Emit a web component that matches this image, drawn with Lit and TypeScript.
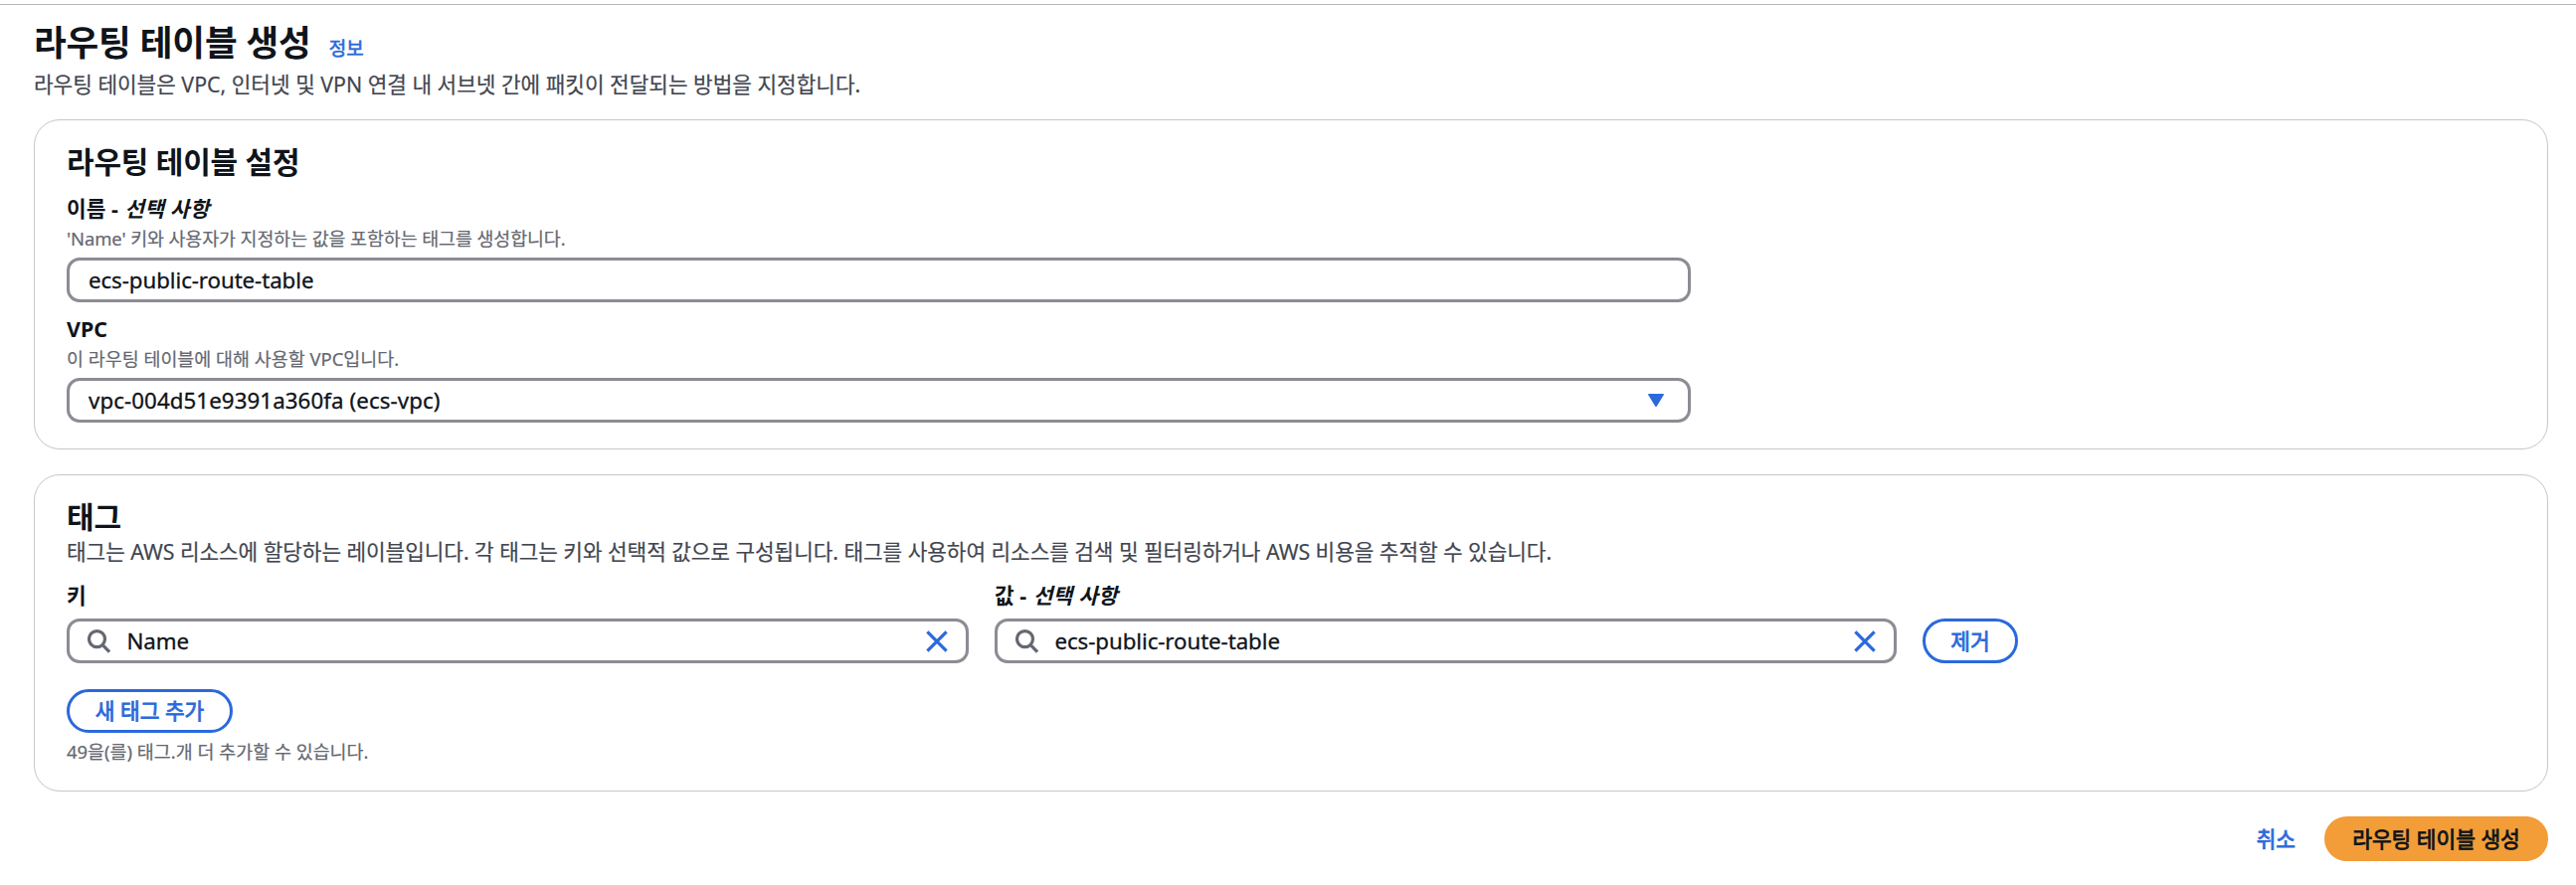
import { LitElement, html, css } from "lit";
import { customElement, property } from "lit/decorators.js";

const controls = css`
  * { box-sizing: border-box; margin: 0; }
  .control {
    display: flex;
    align-items: center;
    height: 45px;
    border: 3px solid #8c8c94;
    border-radius: 13px;
    padding: 0 19px;
    font-size: 22.3px;
    line-height: 32px;
    letter-spacing: -0.08px;
    color: #0f141a;
    white-space: nowrap;
  }
  .control .value { flex: 1; -webkit-text-stroke: 0.3px currentColor; }
  .select { letter-spacing: 0.08px; }
  svg { display: block; flex: none; }
`;

@customElement("form-field")
class FormField extends LitElement {
  @property() label = "";
  @property() hint = "";
  @property({ type: Boolean }) optional = false;

  static styles = css`
    * { box-sizing: border-box; }
    :host { display: flex; flex-direction: column; }
    .label { font-size: 21.4px; line-height: 28px; font-weight: 700; color: #0f141a; white-space: pre; }
    .label i { letter-spacing: 0.2px; margin-left: 1px; }
    .hint { font-size: 18.45px; line-height: 24px; margin-top: 4px; color: #656871; letter-spacing: var(--hint-spacing, 0); -webkit-text-stroke: 0.2px currentColor; }
    .body { margin-top: 7px; }
    .body.bare { margin-top: 9px; }
  `;

  render() {
    return html`
      <div class="label">${this.label}${this.optional ? html` - <i>선택 사항</i>` : ""}</div>
      ${this.hint ? html`<div class="hint">${this.hint}</div>` : ""}
      <div class="body ${this.hint ? "" : "bare"}"><slot></slot></div>
    `;
  }
}

@customElement("search-input")
class SearchInput extends LitElement {
  @property() value = "";

  static styles = [
    controls,
    css`
      :host { display: block; }
      .control { padding: 0 18px; }
      .value { margin-left: 16.5px; }
    `,
  ];

  render() {
    return html`
      <div class="control">
        <svg width="23" height="24" viewBox="0 0 23 24" fill="none" stroke="#656871" stroke-width="3.2">
          <circle cx="9.5" cy="9.6" r="8" />
          <path d="M15.2 15.6 L22 22.6" />
        </svg>
        <span class="value">${this.value}</span>
        <svg width="22" height="22" viewBox="0 0 22 22" fill="none" stroke="#2b69db" stroke-width="3.2">
          <path d="M1.4 1.4 L20.6 20.6 M20.6 1.4 L1.4 20.6" />
        </svg>
      </div>
    `;
  }
}

@customElement("app-root")
class AppRoot extends LitElement {
  static styles = [
    controls,
    css`
      :host {
        display: block;
        min-height: 890px;
        box-sizing: border-box;
        padding-top: 4px;
        background: #fff;
        color: #0f141a;
        font-family: "Noto Sans", "Noto Sans CJK KR", sans-serif;
      }
      .page { border-top: 1px solid #b4b4bb; padding: 15px 28px 0 34px; }
      .heading { display: flex; align-items: baseline; gap: 18px; }
      h1 { font-size: 35.6px; line-height: 44px; font-weight: 700; letter-spacing: -0.17px; }
      .info { font-size: 19px; line-height: 24px; color: #2b69db; -webkit-text-stroke: 0.6px currentColor; }
      .desc { font-size: 21.35px; line-height: 32px; color: #424650; letter-spacing: -0.06px; -webkit-text-stroke: 0.2px currentColor; }
      .page > .desc { margin-top: 5px; letter-spacing: -0.02px; }
      .card { border: 1px solid #c6c6cd; border-radius: 26px; padding: 23px 32px 26px; }
      .settings { margin-top: 19px; }
      .tags { margin-top: 25px; padding-bottom: 27px; }
      h2 { font-size: 30px; line-height: 38px; font-weight: 700; letter-spacing: -0.2px; }
      .settings form-field { width: 1633px; margin-top: 14px; }
      .settings .name { --hint-spacing: -0.11px; }
      .settings .vpc { margin-top: 13px; }
      .select { padding-right: 24px; }
      .row { display: flex; align-items: flex-end; gap: 26px; margin-top: 14px; }
      .row form-field { width: 907px; }
      .button {
        display: flex;
        align-items: center;
        justify-content: center;
        height: 45px;
        border: 3px solid #2b69db;
        border-radius: 23px;
        font: 400 21.4px/32px "Noto Sans", "Noto Sans CJK KR", sans-serif;
        -webkit-text-stroke: 0.8px currentColor;
        color: #2b69db;
        background: #fff;
        padding: 0;
        white-space: nowrap;
      }
      .remove { width: 96px; }
      .add { width: 167px; height: 44px; margin-top: 26px; }
      .limit { margin-top: 7px; font-size: 18.45px; line-height: 24px; color: #656871; -webkit-text-stroke: 0.2px currentColor; }
      .actions { display: flex; justify-content: flex-end; gap: 26px; margin-top: 25px; }
      .cancel { border-color: transparent; }
      .create { width: 225px; border-color: #f29d38; background: #f29d38; color: #0f141a; }
    `,
  ];

  render() {
    return html`
      <main class="page">
        <div class="heading"><h1>라우팅 테이블 생성</h1><a class="info">정보</a></div>
        <p class="desc">라우팅 테이블은 VPC, 인터넷 및 VPN 연결 내 서브넷 간에 패킷이 전달되는 방법을 지정합니다.</p>

        <section class="card settings">
          <h2>라우팅 테이블 설정</h2>
          <form-field class="name" label="이름" optional hint="'Name' 키와 사용자가 지정하는 값을 포함하는 태그를 생성합니다.">
            <div class="control"><span class="value">ecs-public-route-table</span></div>
          </form-field>
          <form-field class="vpc" label="VPC" hint="이 라우팅 테이블에 대해 사용할 VPC입니다.">
            <div class="control select">
              <span class="value">vpc-004d51e9391a360fa (ecs-vpc)</span>
              <svg width="16" height="13" viewBox="0 0 16 13" fill="#2b69db">
                <path d="M1 0 H15 Q16.4 0 15.7 1.3 L9 12.2 Q8 13.6 7 12.2 L.3 1.3 Q-.4 0 1 0Z" />
              </svg>
            </div>
          </form-field>
        </section>

        <section class="card tags">
          <h2>태그</h2>
          <p class="desc">태그는 AWS 리소스에 할당하는 레이블입니다. 각 태그는 키와 선택적 값으로 구성됩니다. 태그를 사용하여 리소스를 검색 및 필터링하거나 AWS 비용을 추적할 수 있습니다.</p>
          <div class="row">
            <form-field label="키"><search-input value="Name"></search-input></form-field>
            <form-field label="값" optional><search-input value="ecs-public-route-table"></search-input></form-field>
            <button class="button remove">제거</button>
          </div>
          <button class="button add">새 태그 추가</button>
          <p class="limit">49을(를) 태그.개 더 추가할 수 있습니다.</p>
        </section>

        <div class="actions">
          <button class="button cancel">취소</button>
          <button class="button create">라우팅 테이블 생성</button>
        </div>
      </main>
    `;
  }
}
